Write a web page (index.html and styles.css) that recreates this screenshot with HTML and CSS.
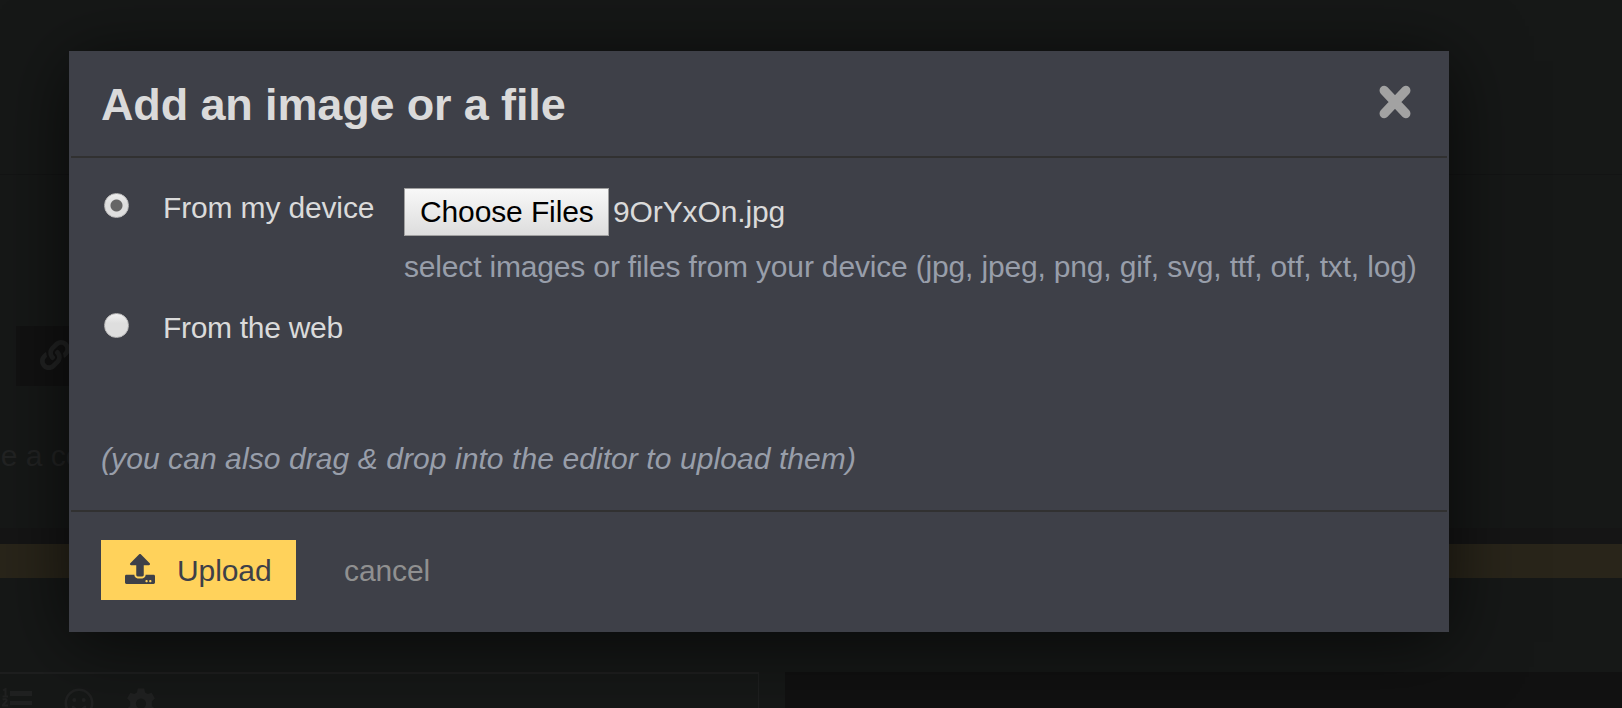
FILE: index.html
```html
<!DOCTYPE html>
<html lang="en">
<head>
<meta charset="utf-8">
<title>Add an image or a file</title>
<link rel="stylesheet" href="styles.css">
</head>
<body>
<div class="page">
  <div class="page-head"></div>
  <div class="page-main">
    <div class="chip">
      <svg class="chip-icon" viewBox="0 0 512 512"><path d="M326.612 185.391c59.747 59.809 58.927 155.698.36 214.59-.11.12-.24.25-.36.37l-67.2 67.2c-59.27 59.27-155.699 59.262-214.96 0-59.27-59.26-59.27-155.7 0-214.96l37.106-37.106c9.84-9.84 26.786-3.3 27.294 10.606.648 17.722 3.826 35.527 9.69 52.721 1.986 5.822.567 12.262-3.783 16.612l-13.087 13.087c-28.026 28.026-28.905 73.66-1.155 101.96 28.024 28.579 74.086 28.749 102.325.51l67.2-67.19c28.191-28.191 28.073-73.757 0-101.83-3.701-3.694-7.429-6.564-10.341-8.569a16.037 16.037 0 0 1-6.947-12.606c-.396-10.567 3.348-21.456 11.698-29.806l21.054-21.055c5.521-5.521 14.182-6.199 20.584-1.731a152.482 152.482 0 0 1 20.522 17.197zM467.547 44.449c-59.261-59.262-155.69-59.27-214.96 0l-67.2 67.2c-.12.12-.25.25-.36.37-58.566 58.892-59.387 154.781.36 214.59a152.454 152.454 0 0 0 20.521 17.196c6.402 4.468 15.064 3.789 20.584-1.731l21.054-21.055c8.35-8.35 12.094-19.239 11.698-29.806a16.037 16.037 0 0 0-6.947-12.606c-2.912-2.005-6.64-4.875-10.341-8.569-28.073-28.073-28.191-73.639 0-101.83l67.2-67.19c28.239-28.239 74.3-28.069 102.325.51 27.75 28.3 26.872 73.934-1.155 101.96l-13.087 13.087c-4.35 4.35-5.769 10.79-3.783 16.612 5.864 17.194 9.042 34.999 9.69 52.721.509 13.906 17.454 20.446 27.294 10.606l37.106-37.106c59.271-59.259 59.271-155.699.001-214.959z"/></svg>
    </div>
    <div class="page-text">ee a co</div>
  </div>
  <div class="strip"></div>
  <div class="band"></div>
  <div class="page-foot">
    <div class="editor">
      <svg class="tool" viewBox="0 0 30 30"><path d="M8 3h22v5H8zM8 13h22v4H8zM8 22h22v5H8z"/><path d="M1 2.500l2.500-1.500v7M.5 8.500h5.500M.5 11.500q5-1.500 4 1.500l-4 4.500h5.500" fill="none" stroke="#202121" stroke-width="2"/></svg>
      <svg class="tool" viewBox="0 0 30 30"><circle cx="15" cy="15" r="13.2" fill="none" stroke="#202121" stroke-width="2.6"/><circle cx="10.3" cy="12" r="2"/><circle cx="19.7" cy="12" r="2"/><path d="M9 19q6 6 12 0" fill="none" stroke="#202121" stroke-width="2.6" stroke-linecap="round"/></svg>
      <svg class="tool" viewBox="1 0.500 28 28"><path fill-rule="evenodd" d="M12 1h6l.8 3.8 2.4 1.4L25 5l3 5.200-2.900 2.600v4.400L28 19.800 25 25l-3.800-1.200-2.400 1.400L18 29h-6l-.8-3.800-2.400-1.400L5 25l-3-5.200 2.900-2.600v-4.400L2 10.200 5 5l3.800 1.200 2.400-1.400zM15 10.200a4.800 4.800 0 1 0 0 9.600 4.800 4.800 0 0 0 0-9.600z"/></svg>
    </div>
    <div class="preview"></div>
  </div>
</div>

<div class="modal" role="dialog">
  <header class="modal-head">
    <h1 class="title">Add an image or a file</h1>
    <svg class="close" viewBox="0 0 31 33"><path d="M5 5.300L26 27.700M26 5.300L5 27.700"/></svg>
  </header>
  <div class="modal-body">
    <div class="option option-device">
      <span class="radio radio-on"></span>
      <span class="option-label">From my device</span>
      <div class="picker">
        <div class="picker-row">
          <span class="choose">Choose Files</span>
          <span class="filename">9OrYxOn.jpg</span>
        </div>
        <div class="help">select images or files from your device (jpg, jpeg, png, gif, svg, ttf, otf, txt, log)</div>
      </div>
    </div>
    <div class="option option-web">
      <span class="radio"></span>
      <span class="option-label option-label-web">From the web</span>
    </div>
    <div class="hint">(you can also drag &amp; drop into the editor to upload them)</div>
  </div>
  <footer class="modal-foot">
    <div class="upload">
      <svg class="upload-icon" viewBox="0 0 512 512"><path d="M296 384h-80c-13.300 0-24-10.700-24-24V192h-87.700c-17.800 0-26.700-21.500-14.100-34.100L242.300 5.700c7.500-7.500 19.800-7.500 27.300 0l152.200 152.200c12.600 12.600 3.700 34.100-14.100 34.100H320v168c0 13.300-10.700 24-24 24zm216-8v112c0 13.300-10.700 24-24 24H24c-13.300 0-24-10.700-24-24V376c0-13.300 10.700-24 24-24h136v8c0 30.900 25.100 56 56 56h80c30.900 0 56-25.100 56-56v-8h136c13.300 0 24 10.700 24 24zm-124 88c0-11-9-20-20-20s-20 9-20 20 9 20 20 20 20-9 20-20zm64 0c0-11-9-20-20-20s-20 9-20 20 9 20 20 20 20-9 20-20z"/></svg>
      <span class="upload-text">Upload</span>
    </div>
    <span class="cancel">cancel</span>
  </footer>
</div>
</body>
</html>
```
FILE: styles.css
```css
* { box-sizing: border-box; }
body {
  margin: 0;
  width: 1622px;
  height: 708px;
  overflow: hidden;
  position: relative;
  background: #161817;
  font: 30px/36px Arial, "Liberation Sans", sans-serif;
  white-space: nowrap;
}
.page { display: flex; flex-direction: column; height: 708px; }
.page-head { height: 175px; border-bottom: 1px solid #131414; }
.page-main { height: 353px; padding-top: 151px; }
.chip { width: 90px; height: 60px; margin-left: 16px; padding: 14px 0 0 24px; background: #121212; }
.chip-icon { display: block; width: 30px; height: 30px; fill: #222323; }
.page-text { margin: 52px 0 0 -16px; color: #222323; }
.strip { height: 16px; background: #151515; }
.band { height: 34px; background: #29251a; }
.page-foot { display: flex; gap: 26px; padding-top: 94px; }
.editor { display: flex; gap: 32px; width: 759px; height: 36px; padding: 14px 0 0 2px; overflow: hidden; border: solid #1e1f1f; border-width: 2px 1px 0 0; }
.tool { flex: none; width: 30px; height: 30px; fill: #202121; }
.preview { flex: 1; height: 36px; background: #111; }

.modal {
  position: absolute;
  left: 69px;
  top: 51px;
  width: 1380px;
  height: 581px;
  padding: 0 2px;
  background: #3e4048;
  box-shadow: 0 10px 70px rgba(0, 0, 0, .65);
}
.modal-head { display: flex; justify-content: space-between; height: 107px; padding: 28px 36px 0 30px; border-bottom: 2px solid #313131; }
.title { margin: 0; font-size: 45px; line-height: 52px; letter-spacing: -.14px; color: #dadada; }
.close { width: 32px; height: 34px; margin-top: 6px; fill: none; stroke: #a2a2a2; stroke-width: 9px; stroke-linecap: round; }
.modal-body { height: 354px; padding: 30px 30px 0; border-bottom: 2px solid #313131; }
.option { display: flex; align-items: flex-start; }
.option-device { height: 120px; }
.option-web { height: 60px; }
.radio { flex: none; width: 25px; height: 25px; margin: 5px 34px 0 3px; border-radius: 50%; background: linear-gradient(#f1f1f1, #dedede 40%); border: 1px solid #bbb; }
.radio-on { background: radial-gradient(circle, #666 5.500px, transparent 6.500px), linear-gradient(#ededed, #dedede 40%); }
.option-label { flex: none; width: 241px; margin-top: 2px; letter-spacing: -.15px; color: #dadada; }
.option-label-web { letter-spacing: -.3px; }
.picker-row { display: flex; gap: 4px; letter-spacing: -.12px; }
.choose { width: 205px; height: 48px; padding-left: 15px; line-height: 46px; color: #000; border: 1px solid #a0a0a0; background: linear-gradient(#f8f8f8, #ddd); }
.filename { color: #dadada; line-height: 48px; }
.help { margin-top: 13px; letter-spacing: -.17px; color: #989eaa; }
.hint { margin-top: 73px; font-style: italic; letter-spacing: .08px; color: #989eaa; }
.modal-foot { display: flex; align-items: flex-start; gap: 48px; padding: 28px 30px; }
.upload { display: flex; align-items: center; gap: 22px; width: 195px; height: 60px; padding-left: 24px; background: #ffd25b; color: #3e4048; }
.upload-icon { width: 30px; height: 30px; margin-bottom: 2px; fill: #3e4048; }
.upload-text { padding-top: 2px; letter-spacing: -.1px; }
.cancel { line-height: 62px; letter-spacing: -.1px; color: #909090; }
```
